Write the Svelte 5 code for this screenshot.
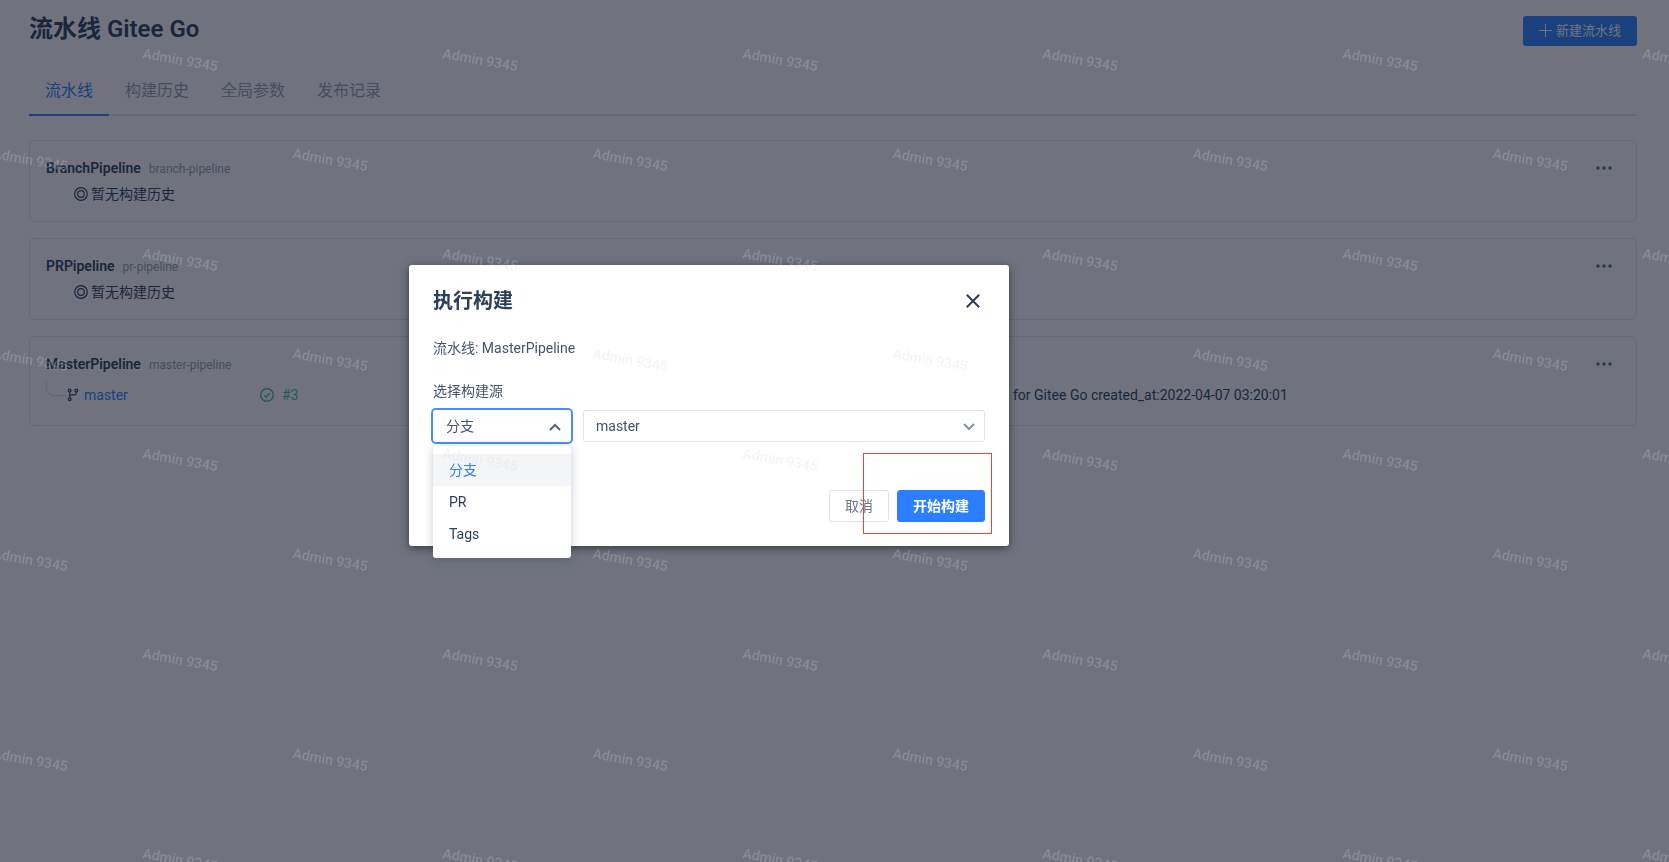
<!-- PipelineBuildDialog -->
<script lang="ts">
  type Pipeline = {
    name: string;
    slug: string;
    build?: { branch: string; number: number; message: string };
  };

  const tabs = ["流水线", "构建历史", "全局参数", "发布记录"];

  const pipelines: Pipeline[] = [
    { name: "BranchPipeline", slug: "branch-pipeline" },
    { name: "PRPipeline", slug: "pr-pipeline" },
    {
      name: "MasterPipeline",
      slug: "master-pipeline",
      build: {
        branch: "master",
        number: 3,
        message: "for Gitee Go created_at:2022-04-07 03:20:01",
      },
    },
  ];

  const sources = ["分支", "PR", "Tags"];

  let activeTab = $state(tabs[0]);
  let source = $state(sources[0]);
  let menuOpen = $state(true);
  let dialogOpen = $state(true);

  const pick = (item: string) => {
    source = item;
    menuOpen = false;
  };
</script>

<div class="page">
  <header>
    <h1>流水线 Gitee Go</h1>
    <button class="create" onclick={() => (dialogOpen = true)}>
      <svg width="14" height="14" viewBox="0 0 14 14"><path d="M6.5 0v13M0 6.5h13" /></svg>
      新建流水线
    </button>
  </header>

  <nav>
    {#each tabs as tab}
      <button class="tab" class:active={tab === activeTab} onclick={() => (activeTab = tab)}>{tab}</button>
    {/each}
  </nav>

  <main>
    {#each pipelines as pipeline}
      <section class="card">
        <div class="card-head">
          <h2>{pipeline.name}</h2>
          <span class="slug">{pipeline.slug}</span>
          <button class="more" aria-label="更多">
            <svg width="16" height="4" viewBox="0 0 16 4">
              <circle cx="2" cy="2" r="1.7" /><circle cx="8" cy="2" r="1.7" /><circle cx="14" cy="2" r="1.7" />
            </svg>
          </button>
        </div>
        {#if pipeline.build}
          <div class="build">
            <div class="branch">
              <span class="elbow"></span>
              <svg class="line-icon" width="12" height="14" viewBox="0 0 12 14">
                <circle cx="2.7" cy="2.6" r="1.4" /><circle cx="2.7" cy="11.2" r="1.4" /><circle cx="9.3" cy="2.6" r="1.4" />
                <path d="M2.7 4v5.8M9.3 4v1.3q0 1.5-1.5 1.5H4.7q-2 0-2 2" />
              </svg>
              <a href="#branch">{pipeline.build.branch}</a>
            </div>
            <div class="status">
              <svg width="14" height="14" viewBox="0 0 14 14">
                <circle cx="7" cy="7" r="6.3" /><path d="M4.2 7.2l2 1.9 3.6-3.8" />
              </svg>
              #{pipeline.build.number}
            </div>
            <span class="message">{pipeline.build.message}</span>
          </div>
        {:else}
          <div class="empty">
            <svg class="line-icon" width="14" height="14" viewBox="0 0 14 14">
              <circle cx="7" cy="7" r="6.3" /><circle cx="7" cy="7" r="3.3" />
            </svg>
            暂无构建历史
          </div>
        {/if}
      </section>
    {/each}
  </main>
</div>

{#if dialogOpen}
  <div class="mask">
    <div class="dialog" role="dialog" aria-labelledby="dialog-title">
      <div class="dialog-head">
        <h3 id="dialog-title">执行构建</h3>
        <button class="close" aria-label="关闭" onclick={() => (dialogOpen = false)}>
          <svg width="14" height="14" viewBox="0 0 14 14"><path d="M0.8 0.8l12.4 12.4M13.2 0.8L0.8 13.2" /></svg>
        </button>
      </div>
      <p>流水线: MasterPipeline</p>
      <label for="source">选择构建源</label>
      <div class="fields">
        <div class="field source" class:open={menuOpen}>
          <select id="source" bind:value={source}>
            {#each sources as item}<option>{item}</option>{/each}
          </select>
          <svg class="arrow" width="12" height="8" viewBox="0 0 12 8"><path d="M1 7l5-5 5 5" /></svg>
          {#if menuOpen}
            <div class="menu">
              {#each sources as item}
                <button class:selected={item === source} onclick={() => pick(item)}>{item}</button>
              {/each}
            </div>
          {/if}
        </div>
        <div class="field target">
          <select aria-label="分支名称"><option>master</option></select>
          <svg class="arrow" width="12" height="8" viewBox="0 0 12 8"><path d="M1 1l5 5 5-5" /></svg>
        </div>
      </div>
      <footer>
        <button class="cancel" onclick={() => (dialogOpen = false)}>取消</button>
        <button class="submit">开始构建</button>
        <span class="highlight"></span>
      </footer>
    </div>
  </div>
{/if}

<svg class="watermark" aria-hidden="true">
  <defs>
    <pattern id="mark" width="300" height="200" patternUnits="userSpaceOnUse">
      <text transform="translate(142 58) rotate(10)">Admin 9345</text>
      <text transform="translate(-8 158) rotate(10)">Admin 9345</text>
      <text transform="translate(292 158) rotate(10)">Admin 9345</text>
    </pattern>
  </defs>
  <rect width="100%" height="100%" fill="url(#mark)" />
</svg>

<style>
  :global(body) {
    background: #fff;
    color: #2c405a;
    font: 14px/20px Roboto, "Noto Sans CJK SC", sans-serif;
  }

  h1, h2, h3, p {
    margin: 0;
  }

  button, select {
    font: inherit;
    color: inherit;
    border: 0;
    background: none;
    padding: 0;
    cursor: pointer;
  }

  svg {
    fill: none;
    stroke: currentColor;
    flex: none;
  }

  .page {
    padding: 12px 32px 24px 29px;
  }

  header {
    display: flex;
    justify-content: space-between;
    align-items: flex-end;
    height: 34px;
  }

  h1 {
    font-size: 24px;
    line-height: 34px;
    font-weight: 600;
  }

  .create {
    display: flex;
    align-items: center;
    gap: 3px;
    height: 30px;
    padding: 0 16px;
    border-radius: 3px;
    background: #2b7fff;
    color: #fff;
    font-size: 13px;
  }

  nav {
    display: flex;
    height: 68px;
    border-bottom: 2px solid #e3e5ea;
  }

  .tab {
    height: 70px;
    padding: 22px 16px 0;
    border-bottom: 2px solid transparent;
    color: #99a0ad;
    font-size: 16px;
  }

  .tab.active {
    color: #2b7fff;
    border-color: #2b7fff;
  }

  main {
    display: flex;
    flex-direction: column;
    gap: 16px;
    margin-top: 24px;
  }

  .card {
    padding: 17px 16px;
    border: 1px solid #e3e5ea;
    border-radius: 6px;
  }

  .card-head {
    display: flex;
    align-items: baseline;
    gap: 8px;
    height: 20px;
  }

  h2 {
    font-size: 14px;
    font-weight: 600;
  }

  .slug {
    color: #99a0ad;
    font-size: 12px;
  }

  .more {
    display: flex;
    align-self: center;
    margin: 0 8px 0 auto;
    padding: 8px 0;
    color: #5c6580;
  }

  .more svg {
    fill: currentColor;
    stroke: none;
  }

  .empty {
    display: flex;
    align-items: center;
    gap: 3px;
    margin-top: 6px;
    padding-left: 28px;
  }

  .line-icon {
    stroke-width: 1.2;
  }

  .build {
    display: grid;
    grid-template-columns: 214px 753px 1fr;
    align-items: center;
    padding: 11px 0 3px;
  }

  .branch, .status {
    display: flex;
    align-items: center;
  }

  .elbow {
    width: 20px;
    height: 14px;
    margin: -12px 1px 0 0;
    box-sizing: border-box;
    border: solid #d8dbe2;
    border-width: 0 0 1px 1px;
    border-radius: 0 0 0 8px;
  }

  a {
    margin-left: 5px;
    color: #2b7fff;
    text-decoration: none;
  }

  .status {
    gap: 8px;
    color: #3cc48a;
  }

  .status svg {
    stroke-width: 1.4;
  }

  .mask {
    position: fixed;
    inset: 0;
    padding: 265px 251px 0 0;
    background: rgba(17, 22, 40, 0.6);
  }

  .dialog {
    box-sizing: border-box;
    max-width: 600px;
    margin: 0 auto;
    padding: 24px;
    border-radius: 3px;
    background: #fff;
    box-shadow: 0 2px 8px rgba(0, 0, 0, 0.5);
  }

  .dialog-head {
    display: flex;
    justify-content: space-between;
    align-items: center;
    height: 24px;
  }

  h3 {
    font-size: 20px;
    line-height: 24px;
    font-weight: 700;
  }

  .close {
    display: flex;
    padding: 5px;
  }

  .close svg {
    stroke-width: 2;
  }

  p {
    margin-top: 25px;
    color: #43536d;
  }

  label {
    display: block;
    margin-top: 23px;
    color: #43536d;
  }

  .fields {
    display: flex;
    gap: 12px;
    margin-top: 9px;
  }

  .field {
    position: relative;
    box-sizing: border-box;
    height: 32px;
    border: 1px solid #e1e3ea;
    border-radius: 3px;
  }

  .source {
    width: 138px;
  }

  .source.open {
    border-color: #fff;
    box-shadow: 0 0 0 2px #4a8cff;
  }

  .target {
    flex: 1;
  }

  select {
    appearance: none;
    display: block;
    width: 100%;
    height: 100%;
    padding: 0 32px 0 12px;
    color: #43536d;
    outline: none;
  }

  .arrow {
    position: absolute;
    top: 12px;
    right: 9px;
    stroke: #8a94a6;
    stroke-width: 2;
    pointer-events: none;
  }

  .open .arrow {
    stroke: #55647c;
  }

  .menu {
    position: absolute;
    top: 35px;
    left: -1px;
    right: -1px;
    padding: 8px 0;
    border-radius: 3px;
    background: #fff;
    box-shadow: 0 2px 10px rgba(30, 45, 80, 0.25);
  }

  .menu button {
    display: block;
    width: 100%;
    height: 32px;
    padding: 0 16px;
    text-align: left;
  }

  .menu .selected {
    background: #f4f5f7;
    color: #2b7fff;
  }

  footer {
    position: relative;
    display: flex;
    justify-content: flex-end;
    gap: 8px;
    margin-top: 48px;
  }

  footer button {
    height: 32px;
    padding: 0 15px;
    border: 1px solid #e1e3ea;
    border-radius: 3px;
    color: #6b778c;
  }

  footer .submit {
    border-color: #2b7fff;
    background: #2b7fff;
    color: #fff;
    font-weight: 600;
  }

  .highlight {
    position: absolute;
    top: -37px;
    right: -7px;
    width: 127px;
    height: 79px;
    border: 1px solid #f04134;
    pointer-events: none;
  }

  .watermark {
    position: fixed;
    inset: 0;
    width: 100%;
    height: 100%;
    stroke: none;
    pointer-events: none;
  }

  .watermark text {
    fill: rgba(213, 213, 213, 0.24);
    font-size: 14px;
    font-weight: 500;
  }
</style>
